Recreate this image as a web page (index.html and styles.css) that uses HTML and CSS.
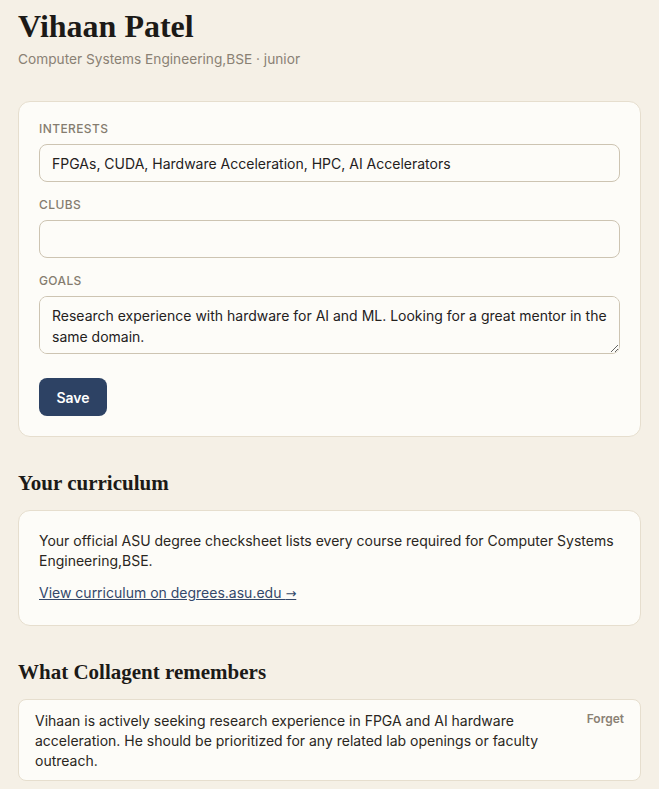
FILE: index.html
```html
<!DOCTYPE html>
<html lang="en">
<head>
  <meta charset="UTF-8" />
  <meta name="viewport" content="width=device-width, initial-scale=1.0"/>
  <title>Vihaan Patel</title>
  <link rel="stylesheet" href="styles.css">
</head>
<body>
  <!-- Profile header -->
  <header class="profile-head">
    <h1>Vihaan Patel</h1>
    <p class="subtitle">Computer Systems Engineering,BSE · junior</p>
  </header>

  <!-- Editable profile -->
  <form class="card profile-form" onsubmit="return false;">
    <label class="field-label" for="interests">Interests</label>
    <input class="field" id="interests" type="text" value="FPGAs, CUDA, Hardware Acceleration, HPC, AI Accelerators" />

    <label class="field-label" for="clubs">Clubs</label>
    <input class="field" id="clubs" type="text" value="" />

    <label class="field-label" for="goals">Goals</label>
    <textarea class="field goals" id="goals" rows="2">Research experience with hardware for AI and ML. Looking for a great mentor in the same domain.</textarea>

    <button class="save-btn" type="submit">Save</button>
  </form>

  <!-- Curriculum -->
  <h2 class="section-title">Your curriculum</h2>
  <div class="card curriculum">
    <p>Your official ASU degree checksheet lists every course required for Computer Systems Engineering,BSE.</p>
    <a href="#">View curriculum on degrees.asu.edu <span class="arrow">→</span></a>
  </div>

  <!-- Memory -->
  <h2 class="section-title">What Collagent remembers</h2>
  <div class="memory">
    <p>Vihaan is actively seeking research experience in FPGA and AI hardware acceleration. He should be prioritized for any related lab openings or faculty outreach.</p>
    <button class="forget-btn" type="button">Forget</button>
  </div>
</body>
</html>
```

FILE: styles.css
```css
body {
  margin: 0;
  padding: 6px 18px 10px;
  background: #f5f0e6;
  color: #1f1c18;
  font-family: 'Inter', 'Liberation Sans', sans-serif;
  font-size: 14px;
}

.profile-head h1 {
  margin: 0;
  font-family: 'Liberation Serif', serif;
  font-size: 32px;
  font-weight: bold;
  line-height: 40px;
  color: #1c1a17;
}

.subtitle {
  margin: 4px 0 0;
  font-size: 13.7px;
  line-height: 18px;
  color: #8a8174;
}

.card {
  background: #fdfcf8;
  border: 1px solid #e6dece;
  border-radius: 12px;
}

.profile-form {
  margin-top: 33px;
  padding: 19px 20px 20px;
  display: flex;
  flex-direction: column;
}

.field-label {
  font-size: 12px;
  font-weight: 500;
  line-height: 16px;
  text-transform: uppercase;
  letter-spacing: 0.4px;
  color: #857c6f;
  margin-bottom: 7px;
}

.field {
  box-sizing: border-box;
  width: 100%;
  height: 38px;
  padding: 0 12px;
  margin-bottom: 15px;
  border: 1px solid #cdc4b2;
  border-radius: 8px;
  background: #fdfcf8;
  font-family: inherit;
  font-size: 14px;
  color: #24211d;
}

.goals {
  height: 58px;
  padding: 8px 12px;
  line-height: 21px;
  margin-bottom: 24px;
  resize: vertical;
}

.save-btn {
  align-self: flex-start;
  width: 68px;
  height: 38px;
  border: none;
  border-radius: 8px;
  background: #2d4264;
  color: #fff;
  font-family: inherit;
  font-size: 14px;
  font-weight: 600;
  cursor: pointer;
}

.section-title {
  margin: 33px 0 14px;
  font-family: 'Liberation Serif', serif;
  font-size: 21px;
  font-weight: bold;
  line-height: 26px;
  color: #1c1a17;
}

.curriculum {
  padding: 20px 20px 21px;
}

.curriculum p {
  margin: 0 0 12px;
  line-height: 20px;
  color: #2a2621;
}

.curriculum a {
  color: #34486a;
  line-height: 20px;
}

.arrow {
  font-family: 'DejaVu Sans', sans-serif;
  font-size: 13px;
}

.memory {
  display: flex;
  align-items: flex-start;
  gap: 16px;
  padding: 11px 16px 9px;
  background: #fdfcf8;
  border: 1px solid #e6dece;
  border-radius: 8px;
}

.memory p {
  flex: 1;
  margin: 0;
  font-size: 14px;
  line-height: 20px;
  color: #2a2621;
}

.forget-btn {
  border: none;
  background: none;
  padding: 0;
  margin-top: -1px;
  margin-left: auto;
  font-family: inherit;
  font-size: 12px;
  font-weight: 600;
  line-height: 18px;
  color: #8a8174;
  cursor: pointer;
}
```
